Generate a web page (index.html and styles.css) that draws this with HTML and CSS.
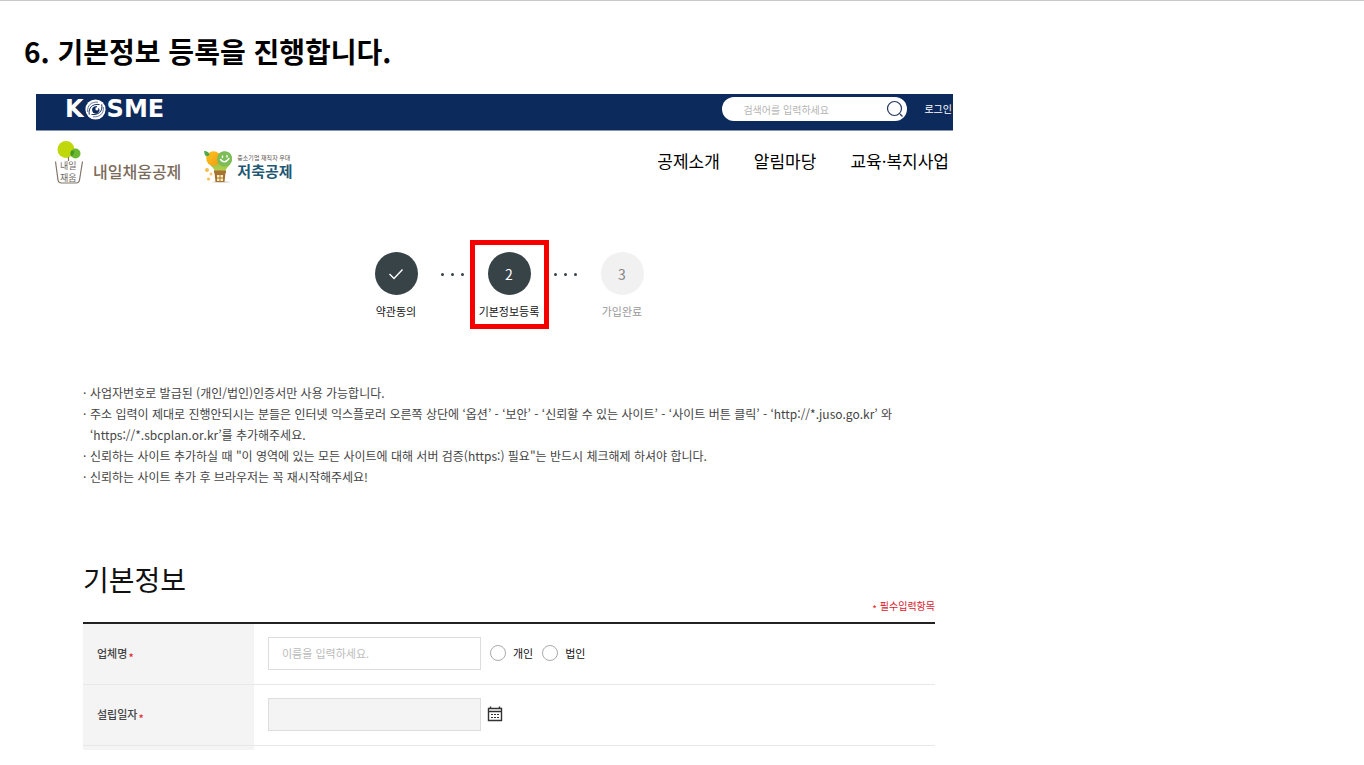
FILE: index.html
```html
<!DOCTYPE html>
<html lang="ko">
<head>
<meta charset="utf-8">
<title>기본정보 등록</title>
<link rel="stylesheet" href="styles.css">
</head>
<body>
<main class="guide">
  <h1 class="guide-title">6. 기본정보 등록을 진행합니다.</h1>
  <div class="site">
    <div class="topbar">
      <a class="kosme" href="#" aria-label="KOSME">
        <span>K</span>
        <svg class="globe" viewBox="0 0 20 20" aria-hidden="true">
          <circle cx="10" cy="10" r="9.6" fill="#fff"/>
          <g fill="none" stroke="#0d2a5c" stroke-linecap="round">
            <path d="M2.500 12C2 6 6 2.500 12 3" stroke-width=".6"/>
            <path d="M4 14.500C3 8 7 4.500 13.500 5.200" stroke-width=".9"/>
            <path d="M17.500 8C18 14 14 17.500 8 17" stroke-width=".6"/>
            <path d="M16 5.500C17 12 13 15.500 6.500 14.800" stroke-width=".9"/>
            <path d="M8 12.800C5.500 9.500 8 6.500 11.500 7.200C9.500 8 9 10 10.500 11C12 12 13 10.500 13 9C15 12 11 15.500 8 12.800Z" fill="#0d2a5c" stroke-width=".6"/>
          </g>
        </svg>
        <span>SME</span>
      </a>
      <form class="search" role="search">
        <input class="search-input" type="search" placeholder="검색어를 입력하세요" aria-label="검색어">
        <button class="search-button" type="button" aria-label="검색">
          <svg viewBox="0 0 18 18" aria-hidden="true"><g fill="none" stroke="#24365f" stroke-width="1.200"><circle cx="8.500" cy="8.500" r="7"/><path d="M14 14l2.500 2.500"/></g></svg>
        </button>
      </form>
      <a class="login" href="#">로그인</a>
    </div>
    <header class="header">
      <a class="brand" href="#">
        <svg class="pot" viewBox="0 0 30 44" role="img" aria-label="내일채움">
          <circle cx="12" cy="9.500" r="8.500" fill="#bfd70b"/>
          <circle cx="21.500" cy="13.500" r="5" fill="#6ab82f"/>
          <path d="M17.300 10.700A8.500 8.500 0 0 1 20.400 11A8.500 8.500 0 0 1 17.700 16.500A5 5 0 0 1 17.300 10.700Z" fill="#3f9828"/>
          <path d="M14.500 17V21M1.500 21.500L4 40Q4.500 43 7.500 43H22Q25 43 25.500 40L28.500 21.500" fill="none" stroke="#81766a" stroke-width="1.200"/>
        </svg>
        <span class="pot-text">내일<br>재움</span>
        <span class="brand-name">내일채움공제</span>
      </a>
      <a class="brand savings" href="#">
        <svg class="balloon" viewBox="0 0 30 34" aria-hidden="true">
          <defs><linearGradient id="warm" x2="1" y2="1"><stop stop-color="#fbc51c"/><stop offset="1" stop-color="#f39a13"/></linearGradient>
          <linearGradient id="fresh" x2="0" y2="1"><stop stop-color="#62b557"/><stop offset="1" stop-color="#bed144"/></linearGradient></defs>
          <ellipse cx="18" cy="32" rx="9" ry="1.200" fill="#e4dfd8"/>
          <path d="M5 13C8 16 11 18 12 22H22C23 17 29 15 29 9C29 3 25 1.500 21.500 1.500C17 1.500 15 4 14.500 7Z" fill="url(#fresh)"/>
          <circle cx="10.500" cy="8.500" r="7.300" fill="url(#warm)"/>
          <circle cx="21.500" cy="9" r="7.500" fill="#7dbd56"/>
          <path d="M1 1Q6 1 6.500 5Q2 9 1 1Z" fill="#51a849"/>
          <path d="M19.500 6v1.500M24 5.500v1.500M17.500 9.500Q21.500 14.500 26 8.500" fill="none" stroke="#fff" stroke-width="1.400" stroke-linecap="round"/>
          <path d="M11 20.500H23V23H22.500L21.500 32H12.500L11.500 23H11Z" fill="#a57434"/>
          <path d="M14 25h2.500v2.500h-2.500zM17.500 25h2.500v2.500h-2.500zM14 28.500h2.500v2.500h-2.500zM17.500 28.500h2.500v2.500h-2.500z" fill="#fff0b8"/>
          <circle cx="4" cy="20" r="2" fill="#f8bd4c"/><circle cx="8" cy="24" r="1.500" fill="#f8c96b"/><circle cx="5.500" cy="29" r="1.500" fill="#f8bd4c"/>
        </svg>
        <span class="savings-text"><small>중소기업 재직자 우대</small><strong>저축공제</strong></span>
      </a>
      <nav class="nav">
        <a href="#">공제소개</a>
        <a href="#">알림마당</a>
        <a href="#">교육·복지사업</a>
      </nav>
    </header>
    <div class="content">
      <ol class="steps">
        <li class="step">
          <span class="step-mark"><svg viewBox="0 0 16 16" role="img" aria-label="완료"><path d="M1.500 8L6 12.500L14.500 3.500" fill="none" stroke="#fff" stroke-width="1.400"/></svg></span>
          <span>약관동의</span>
        </li>
        <li class="dots" aria-hidden="true"><i></i><i></i><i></i></li>
        <li class="step current" aria-current="step"><span class="step-mark">2</span><span>기본정보등록</span></li>
        <li class="dots" aria-hidden="true"><i></i><i></i><i></i></li>
        <li class="step pending"><span class="step-mark">3</span><span>가입완료</span></li>
      </ol>
      <ul class="notes">
        <li>사업자번호로 발급된 (개인/법인)인증서만 사용 가능합니다.</li>
        <li>주소 입력이 제대로 진행안되시는 분들은 인터넷 익스플로러 오른쪽 상단에 ‘옵션’ - ‘보안’ - ‘신뢰할 수 있는 사이트’ - ‘사이트 버튼 클릭’ - ‘http://*.juso.go.kr’ 와 <br>‘https://*.sbcplan.or.kr’를 추가해주세요.</li>
        <li>신뢰하는 사이트 추가하실 때 "이 영역에 있는 모든 사이트에 대해 서버 검증(https:) 필요"는 반드시 체크해제 하셔야 합니다.</li>
        <li>신뢰하는 사이트 추가 후 브라우저는 꼭 재시작해주세요!</li>
      </ul>
      <h2 class="section-title">기본정보</h2>
      <p class="required-note"><span class="required">*</span> 필수입력항목</p>
      <table class="form-table">
        <tbody>
          <tr>
            <th scope="row"><label for="company">업체명<span class="required">*</span></label></th>
            <td><div class="fields">
              <input class="field" id="company" type="text" placeholder="이름을 입력하세요.">
              <label class="choice"><input type="radio" name="kind">개인</label>
              <label class="choice"><input type="radio" name="kind">법인</label>
            </div></td>
          </tr>
          <tr>
            <th scope="row"><label for="founded">설립일자<span class="required">*</span></label></th>
            <td><div class="fields">
              <input class="field locked" id="founded" type="text" readonly>
              <button class="calendar" type="button" aria-label="날짜 선택">
                <svg viewBox="0 0 16 16" aria-hidden="true"><path d="M1.500 2.500H14.500V14.500H1.500ZM1.500 5.500H14.500M3.500 .5V3M12.500 .5V3" fill="none" stroke="#333" stroke-width="1.400"/><path d="M4 8.500h2M7 8.500h2M10 8.500h2M4 11.500h2M7 11.500h2M10 11.500h2" stroke="#333" stroke-width="1.200"/></svg>
              </button>
            </div></td>
          </tr>
          <tr class="next-row"><th></th><td></td></tr>
        </tbody>
      </table>
    </div>
  </div>
</main>
</body>
</html>
```
FILE: styles.css
```css
* { box-sizing: border-box; }
body { margin: 0; background: #fff; color: #111; font-family: "Noto Sans CJK KR", sans-serif; }
a { color: inherit; text-decoration: none; }
button { border: 0; padding: 0; background: none; }
input { font-family: inherit; }
svg { display: block; }

.guide { border-top: 1px solid #c8c8c8; padding: 30px 24px 15px; }
.guide-title { margin: 0; font-size: 28px; line-height: 40px; font-weight: 700; color: #000; }
.site { max-width: 917px; margin: 23px 0 0 12px; }

.topbar { display: flex; align-items: center; padding: 3px 1px 9px 29px; background: #0d2a5c; border-bottom: 1px solid #8794ae; color: #fff; }
.kosme { display: flex; align-items: center; gap: 1px; font: 700 24px/24px "DejaVu Sans", sans-serif; }
.globe { width: 21px; height: 21px; }
.search { display: flex; align-items: center; width: 185px; height: 24px; margin-left: auto; padding: 0 3px 0 21px; border-radius: 12px; background: #fff; }
.search-input { flex: 1; min-width: 0; padding: 0; border: 0; outline: 0; background: none; font-size: 10px; }
.search-input::placeholder { color: #b4b4b4; }
.search-button svg { width: 18px; height: 18px; }
.login { margin-left: 17px; font-size: 10px; line-height: 24px; }

.header { display: flex; align-items: flex-start; padding: 9px 4px 6px 18px; }
.brand { position: relative; display: flex; align-items: flex-end; gap: 9px; height: 44px; }
.pot { width: 30px; height: 44px; }
.pot-text { position: absolute; left: 6px; bottom: 0; font-size: 9px; line-height: 12px; color: #6f655b; }
.brand-name { font-size: 16px; line-height: 26px; font-weight: 500; color: #7b6b5b; }
.savings { margin-left: 22px; gap: 4px; }
.balloon { width: 30px; height: 34px; }
.savings-text { display: flex; flex-direction: column; padding-bottom: 4px; }
.savings-text small { font-size: 6px; line-height: 9px; color: #5a514c; }
.savings-text strong { font-size: 15px; line-height: 18px; color: #1f5873; }
.nav { display: flex; gap: 34px; margin-left: auto; font-size: 17px; line-height: 42px; color: #000; }

.content { padding: 50px 18px 0 47px; }
.steps { display: flex; justify-content: center; margin: 0; padding: 0; list-style: none; }
.step { display: flex; flex-direction: column; align-items: center; gap: 8px; width: 79px; height: 89px; padding-top: 7px; border: 5px solid transparent; font-size: 11px; line-height: 16px; white-space: nowrap; }
.step-mark { display: flex; flex: none; align-items: center; justify-content: center; width: 43px; height: 43px; border-radius: 50%; background: #374347; color: #fff; font-size: 14px; }
.step-mark svg { width: 16px; height: 16px; }
.current { border-color: #f60000; }
.pending { color: #999; }
.pending .step-mark { background: #f1f1f1; color: #888; }
.dots { display: flex; align-items: center; justify-content: center; gap: 7px; width: 34px; height: 68px; }
.dots i { width: 3px; height: 3px; border-radius: 50%; background: #374347; }

.notes { margin: 53px 0 0; padding: 0; list-style: none; font-size: 12px; line-height: 21px; color: #444; }
.notes li { padding-left: 7px; }
.notes li::before { content: "·"; float: left; margin-left: -7px; }

.section-title { margin: 72px 0 0; font-size: 28px; line-height: 40px; font-weight: 400; }
.required-note { margin: 0; font-size: 10px; line-height: 14px; text-align: right; color: #d9232e; }
.form-table { width: 100%; margin-top: 8px; border-collapse: separate; border-spacing: 0; border-top: 2px solid #222; }
.form-table th, .form-table td { height: 61px; padding: 0 14px 2px; border-bottom: 1px solid #e8e8e8; font-size: 11px; line-height: 16px; }
.form-table th { width: 171px; background: #f4f4f4; color: #444; font-weight: 500; text-align: left; }
.form-table .next-row th, .form-table .next-row td { height: 4px; border: 0; }
.required { display: inline-block; padding-top: 4px; line-height: 10px; vertical-align: middle; color: #e02a2a; }
.form-table .required { margin-left: 1px; }
.fields { display: flex; align-items: center; }
.field { width: 213px; height: 33px; padding: 0 13px; border: 1px solid #ddd; font-size: 11px; }
.field::placeholder { color: #bbb; }
.locked { background: #f4f4f4; }
.choice { display: flex; align-items: center; gap: 7px; margin-left: 9px; }
.choice input { appearance: none; width: 16px; height: 16px; margin: 0; border: 1px solid #aaa; border-radius: 50%; background: #fff; }
.calendar { margin-left: 6px; }
.calendar svg { width: 16px; height: 16px; }
```
